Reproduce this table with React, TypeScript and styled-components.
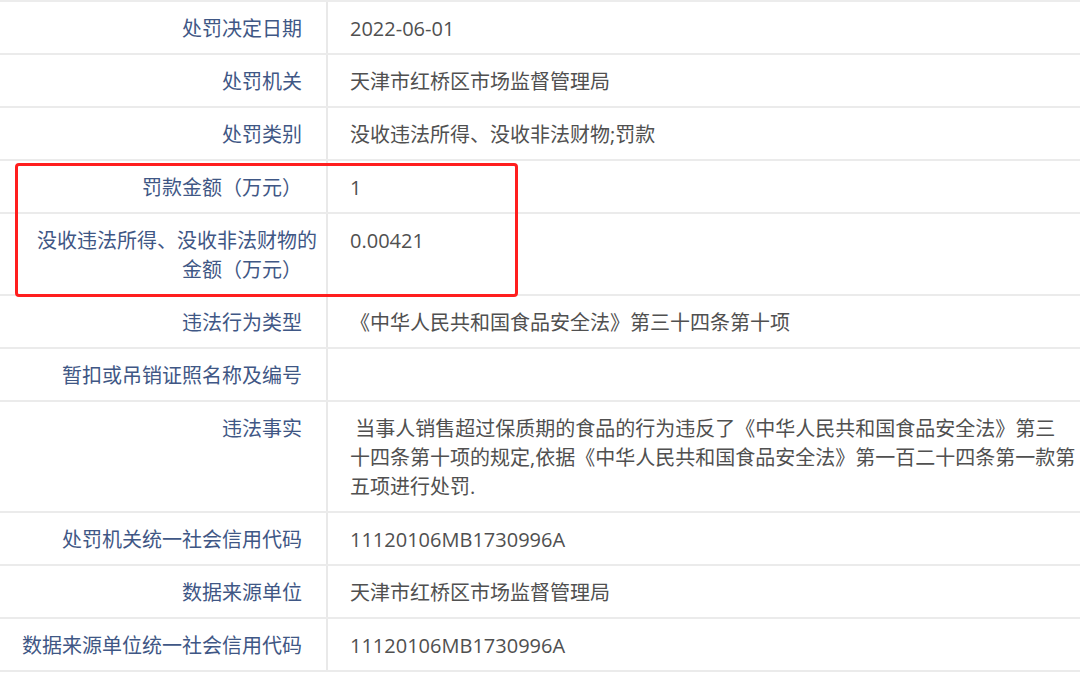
import { Fragment } from 'react'
import styled, { createGlobalStyle } from 'styled-components'

type Field = {
    label: string
    value: string
    highlight?: boolean
}

const fields: Field[] = [
    { label: '处罚决定日期', value: '2022-06-01' },
    { label: '处罚机关', value: '天津市红桥区市场监督管理局' },
    { label: '处罚类别', value: '没收违法所得、没收非法财物;罚款' },
    { label: '罚款金额（万元）', value: '1', highlight: true },
    {
        label: '没收违法所得、没收非法财物的\n金额（万元）',
        value: '0.00421',
        highlight: true,
    },
    { label: '违法行为类型', value: '《中华人民共和国食品安全法》第三十四条第十项' },
    { label: '暂扣或吊销证照名称及编号', value: '' },
    {
        label: '违法事实',
        value:
            ' 当事人销售超过保质期的食品的行为违反了《中华人民共和国食品安全法》第三\n十四条第十项的规定,依据《中华人民共和国食品安全法》第一百二十四条第一款第\n五项进行处罚.',
    },
    { label: '处罚机关统一社会信用代码', value: '11120106MB1730996A' },
    { label: '数据来源单位', value: '天津市红桥区市场监督管理局' },
    { label: '数据来源单位统一社会信用代码', value: '11120106MB1730996A' },
]

const GlobalStyle = createGlobalStyle`
    html, body {
        margin: 0;
        padding: 0;
        background: #ffffff;
        overflow: hidden;
    }
    body {
        font-family: "Open Sans", "Noto Sans CJK SC", sans-serif;
    }
`

const FieldRow = ({ field }: { field: Field }) => {
    const lines = field.label.split('\n')
    return (
        <Row>
            <Label>
                {lines.map((line, i) => (
                    <LabelLine key={i} $overhang={lines.length > 1 && i === 0}>
                        {line}
                    </LabelLine>
                ))}
            </Label>
            <Value>{field.value}</Value>
        </Row>
    )
}

export default function App() {
    const before = fields.filter((f, i) => i < 3)
    const marked = fields.filter(f => f.highlight)
    const after = fields.filter((f, i) => i > 4)

    return (
        <>
            <GlobalStyle />
            <Table>
                {before.map(f => (
                    <FieldRow key={f.label} field={f} />
                ))}
                <Highlight>
                    {marked.map(f => (
                        <FieldRow key={f.label} field={f} />
                    ))}
                </Highlight>
                {after.map(f => (
                    <Fragment key={f.label}>
                        <FieldRow field={f} />
                    </Fragment>
                ))}
            </Table>
        </>
    )
}

const Table = styled.div`
    border-top: 2px solid #ececec;
    width: 1080px;
`

const Row = styled.div`
    display: grid;
    grid-template-columns: 328px 1fr;
    border-bottom: 2px solid #ebebeb;
`

const Label = styled.div`
    padding: 12px 24px 10px 20px;
    border-right: 2px solid #e9e9e9;
    text-align: right;
    font-size: 20px;
    line-height: 29px;
    color: #3f5785;
`

const LabelLine = styled.div<{ $overhang: boolean }>`
    white-space: nowrap;
    margin-right: ${p => (p.$overhang ? '-15px' : '0')};
`

const Value = styled.div`
    padding: 12px 0 10px 22px;
    font-size: 20px;
    line-height: 29px;
    color: #505050;
    white-space: pre;
`

const Highlight = styled.div`
    position: relative;

    &::after {
        content: '';
        position: absolute;
        top: 2px;
        bottom: -1px;
        left: 15px;
        width: 497px;
        border: 3px solid #ff1e1e;
        border-radius: 4px;
        pointer-events: none;
    }
`
